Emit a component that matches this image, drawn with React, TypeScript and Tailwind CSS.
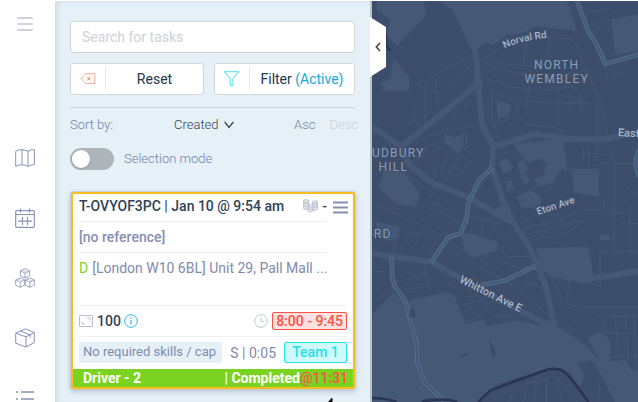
import { useState } from 'react';
import type { ReactNode } from 'react';

const areas = [
  'M205 0 H590 L620 92 L500 80 L455 100 L410 105 L372 135 L350 128 L318 152 L290 100 L262 40 Z',
  'M20 0 H160 L168 45 L80 138 L50 100 L62 60 L20 30 Z',
  'M72 175 L118 232 L118 272 H42 L32 250 L60 235 Z',
  'M724 58 L800 44 H830 V150 L735 165 Z',
  'M380 300 L424 315 L418 345 L384 355 Z',
  'M222 402 L252 412 L282 402 L280 440 L262 462 L245 440 L226 432 Z',
  'M432 432 L578 415 L592 508 L605 506 H686 V590 L612 578 L606 512 L575 508 L548 548 L500 560 L494 535 L520 528 L528 500 L505 478 L480 490 L455 470 Z',
  'M386 485 L410 475 L430 500 L420 515 L398 520 Z',
  'M440 490 L460 480 L474 510 L455 525 Z',
  'M406 545 L424 540 L432 568 L412 576 Z',
  'M450 528 L470 520 L480 545 L462 552 Z',
  'M440 590 L480 570 L515 590 L510 620 L455 625 Z',
  'M42 510 L100 515 L150 580 L140 620 L80 612 L25 560 Z',
  'M370 630 L408 608 L428 668 L368 646 Z',
  'M272 703 L300 700 L384 725 L382 752 L308 772 L285 755 Z',
  'M498 745 L655 740 L670 825 L628 836 L560 822 L515 790 Z',
  'M6 945 L70 880 L102 905 L222 876 L252 884 L285 972 L340 960 L350 978 L440 962 L540 980 L620 1030 L665 1080 L622 1090 L644 1125 L628 1165 L600 1120 L540 1105 L375 1155 L325 1206 H6 Z',
  'M655 1012 L690 995 L722 1022 L720 1085 L765 1080 L785 1110 L810 1110 V1206 H745 L705 1120 Z',
  'M690 705 H720 V720 H690 Z',
  'M15 662 L88 682 L85 710 L50 725 L25 700 Z',
];

const streets = [
  'M318 160 L240 200 L142 255 M142 258 L160 265 L208 280 L275 230 L310 180 M165 250 V380 M195 232 L202 310',
  'M330 180 L380 205 L450 222 L560 228 L645 212 M345 168 L400 190 L490 200 M330 185 L395 140 L500 108 L610 118',
  'M350 235 L420 260 L520 272 L600 262 L650 235 M362 245 L368 370 L392 420 M365 278 L440 300 L540 310 L640 305',
  'M480 230 L470 330 M565 228 V380 M598 280 V338 M632 275 V345 M580 310 H660 M440 300 L445 350 L475 375 L565 385',
  'M378 370 L440 350 M470 130 L460 190 M540 115 L535 160 L505 225 M330 330 H368 M610 118 L640 190 L690 300 L730 480',
  'M630 40 L724 25 M640 80 L720 60 M700 150 L712 240 M725 200 L735 250 M740 220 L765 215 M680 300 V480 M735 480 V750',
  'M290 290 V330 M205 310 L222 360 M235 330 L262 362 M130 325 L135 360 L150 378 M135 360 L112 368',
  'M155 415 L230 392 L305 378 L330 385 M125 485 L180 435 L220 425 M290 390 V440 L250 500 L210 560 M275 440 L310 465 M300 480 L260 530',
  'M205 480 L190 540 M230 465 L215 520 M165 445 L155 475 M250 500 L275 515 M380 470 L440 448 M350 505 L330 560',
  'M640 440 V480 M640 460 H680 M655 440 V500 M670 480 H710 M690 490 H790 M770 560 L805 590 M790 420 V480',
  'M160 615 L250 655 L290 690 M190 605 L240 640 M20 612 L120 660 L230 712 M110 695 L180 705 L215 740 M82 690 L70 760',
  'M125 690 L105 735 M150 700 L130 745 M175 705 L155 750 M200 715 L175 765 M215 740 L420 850 L540 950 M245 710 L430 800 L495 810',
  'M232 725 L400 812 M190 770 L212 820 L260 870 M160 785 L180 868 M70 850 L170 820 M6 815 L70 812 M105 868 L172 860 M75 850 L20 900',
  'M270 665 L300 650 L400 670 M380 650 L368 700 M345 660 L330 700 M400 735 L398 755 L412 770 L495 770 M380 710 L450 700 L470 680',
  'M450 670 L560 610 M460 690 L620 640 M470 705 L640 660 M490 720 L590 700 L640 660 M560 640 L590 695 M520 660 L535 700',
  'M700 600 L705 640 M730 600 V750 M680 755 H810 M640 630 H700 M780 610 V760 M690 640 H760 M755 670 H810',
  'M530 800 L560 860 L575 910 L640 920 H810 M505 855 L440 845 L420 862 M475 835 L455 870 M640 840 L690 860 V760 M600 830 L590 900',
  'M680 950 H805 M700 950 L710 1010 M735 945 L745 1070 M765 945 L775 1080 M790 945 L800 1115 M720 1070 H800 M710 1000 H800',
  'M250 885 L285 970 L350 935 L340 900 L275 915 M300 890 L325 885 L330 910 M285 970 L262 1000 M360 950 L460 945 M350 1120 L340 1200',
  'M375 1190 L470 1150 L560 1130 L620 1206 M430 1170 L418 1206 M470 1150 L460 1206 M500 1142 L492 1206 M530 1135 V1206 M560 1130 L575 1206',
  'M690 1140 L685 1206 M580 1010 L605 990 L595 975 M690 1140 L720 1130 M90 540 L60 590 M105 520 L160 560 M170 600 L205 570',
];

const mainRoads = [
  'M245 0 L318 160 L325 250 L335 370 L370 440 L365 505 L400 605 L430 668 L480 745 L505 800 L530 870 L555 985',
  'M325 250 L95 440 L6 380',
  'M95 440 L115 490 L180 545 L290 590 L430 668',
  'M370 440 L500 402 L600 418 L700 418 L810 395',
  'M6 760 L70 770 L182 785 L350 880 L555 985 L640 1040 L690 1100 L745 1206',
  'M505 795 L560 825 L640 840 L700 830 L810 812',
];

const highlights = [
  'M620 0 L655 95 L678 130 L706 192 L810 162',
  'M368 502 L328 540 L296 605 L290 655 L272 700 L235 712 L182 788',
  'M64 770 L68 840 L75 860 L105 900 L140 1030 L142 1090 L165 1150 L225 1204',
  'M335 855 L405 842 L495 798',
  'M806 450 L796 490 L806 530',
];

function MapView() {
  return (
    <svg
      role="img"
      aria-label="Map"
      viewBox="6 3 798 1203"
      preserveAspectRatio="xMinYMin slice"
      className="block h-full w-full"
      fill="none"
      strokeLinejoin="round"
    >
      <defs>
        <path id="norval" d="M404 145 Q462 117 560 112" />
        <path id="eton" d="M504 645 L640 600" />
        <path id="whitton" d="M266 846 L470 947" />
      </defs>
      <g fill="#455977">
        {areas.map((d) => (
          <path key={d} d={d} />
        ))}
      </g>
      <g stroke="#465875" strokeWidth="2.6">
        {streets.map((d) => (
          <path key={d} d={d} />
        ))}
      </g>
      <g stroke="#455876" strokeWidth="18">
        {mainRoads.map((d) => (
          <path key={d} d={d} />
        ))}
      </g>
      <circle cx="324" cy="248" r="15" fill="#455876" />
      <circle cx="508" cy="797" r="17" fill="#455876" />
      <g stroke="#5a7090" strokeWidth="13">
        {highlights.map((d) => (
          <path key={d} d={d} />
        ))}
      </g>
      <g stroke="#465b7a" strokeWidth="8">
        {highlights.map((d) => (
          <path key={d} d={d} />
        ))}
      </g>
      <g stroke="#2a3553" strokeWidth="8">
        <path d="M325 1206 L360 1172 L390 1160 L520 1113 Q545 1102 575 1110 Q595 1120 655 1206" />
        <path d="M0 1194 Q50 1194 80 1206 M155 1206 Q190 1196 240 1200 L262 1206" />
        <path d="M45 95 L50 140 L62 152" />
      </g>
      <path d="M120 930 L132 925 L138 950 L122 955 Z M262 1072 L298 1056 V1062 L264 1074 Z M358 1010 L378 1066 L366 1068 Z" fill="#3a4a68" />
      <path d="M484 490 L515 476 L526 495 L494 512 Z" stroke="#3e4e6c" strokeWidth="6" />
      <g
        fill="#8c9eb6"
        stroke="#3c4c69"
        strokeWidth="4"
        paintOrder="stroke"
        fontFamily="Roboto, sans-serif"
        fontSize="36"
        textAnchor="middle"
        className="tracking-widest"
      >
        <text x="560" y="207">NORTH</text>
        <text x="560" y="250">WEMBLEY</text>
        <text x="72" y="470">SUDBURY</text>
        <text x="70" y="514">HILL</text>
        <text x="12" y="713">FORD</text>
      </g>
      <g
        fill="#a9b7c8"
        stroke="#3c4c69"
        strokeWidth="4"
        paintOrder="stroke"
        fontFamily="Roboto, sans-serif"
        fontSize="30"
        fontWeight="500"
      >
        <text><textPath href="#norval">Norval Rd</textPath></text>
        <text><textPath href="#eton">Eton Ave</textPath></text>
        <text fontSize="33"><textPath href="#whitton">Whitton Ave E</textPath></text>
        <text x="743" y="408" fontSize="33" transform="rotate(4 743 408)">Eastcote</text>
      </g>
    </svg>
  );
}

function NavIcon({ label, children }: { label: string; children: ReactNode }) {
  return (
    <a href="#" aria-label={label} className="flex h-15 shrink-0 items-center justify-center">
      <svg width="20" height="20" viewBox="0 0 20 20" fill="none" stroke="#8794b8" strokeLinejoin="round">
        {children}
      </svg>
    </a>
  );
}

function Sidebar() {
  return (
    <nav className="flex w-[55px] shrink-0 flex-col overflow-hidden bg-white pr-[5px]">
      <button aria-label="Menu" className="mt-[15px] mb-24 flex h-4 shrink-0 items-center justify-center">
        <svg width="16" height="14" viewBox="0 0 16 14" stroke="#cfd4dc" strokeWidth="2" strokeLinecap="round">
          <path d="M1 1H15M1 7H15M1 13H15" />
        </svg>
      </button>
      <NavIcon label="Map">
        <path d="M.7 3.3Q4 1.2 7 1.7T13 3.3Q16 1 19.4 1.7V16.5Q16 16.5 13 18.3 10 16.8 7 16.8T.7 18.3ZM7 1.7V16.8M13 3.3V18.3" />
      </NavIcon>
      <NavIcon label="Calendar">
        <rect x=".7" y="2.7" width="18.6" height="16.6" rx="1" strokeWidth="1.2" />
        <path d="M.7 6.5H19.3M5.5.5V4.5M14.5.5V4.5M7.5 9V17M12.5 9V17M3 13.2H17" strokeWidth="1.2" />
      </NavIcon>
      <NavIcon label="Inventory">
        <g strokeWidth=".8">
          <path d="M10 .6 14.6 2.8V7.8L10 10 5.4 7.8V2.8ZM5.4 2.8 10 5.2 14.6 2.8M10 5.2V10" />
          <path d="M5.2 9.8 9.8 12V17L5.2 19.3.6 17V12ZM.6 12 5.2 14.3 9.8 12M5.2 14.3V19.3" />
          <path d="M14.8 9.8 19.4 12V17L14.8 19.3 10.2 17V12ZM10.2 12 14.8 14.3 19.4 12M14.8 14.3V19.3" />
          <path d="M7.5 2 12.2 4.2M3 11 7.5 13.2M12.5 11 17 13.2" strokeWidth=".5" />
        </g>
      </NavIcon>
      <NavIcon label="Packages">
        <path d="M10.5.9 19.3 4.5V14.5L11 19 .7 15.2V5.2ZM.7 5.2 11 8.8 19.3 4.5M11 8.8V19M5.5 3.2 15.2 6.7V9.5" />
      </NavIcon>
      <NavIcon label="List">
        <path d="M1 4H3M1 11H3M1 18H3M6 4H19M6 11H19M6 18H19" strokeWidth="1.6" />
      </NavIcon>
    </nav>
  );
}

function TaskCard() {
  return (
    <article className="mt-[22px] ml-px rounded-[3px] border-2 border-[#fcbc1c] bg-white text-sm shadow-[0_0_0_1px_#c5ced6,0_2px_5px_1px_#b9c8d2]">
      <div className="flex pr-[5px] pl-1.5">
        <div className="min-w-0 flex-1">
          <header className="flex h-7 items-center border-b border-[#edf1f4] pb-1 font-medium text-[#2f4256]">
            <h2 className="flex-1 whitespace-nowrap">T-OVYOF3PC | Jan 10 @ 9:54 am</h2>
            <svg width="15" height="14" viewBox="0 0 15 14" fill="#e8ebf1" stroke="#b4bccd" strokeWidth=".9" className="mr-1 shrink-0">
              <path d="M.6 2V9.5Q3 11.5 5.5 9.5V2Z" />
              <ellipse cx="3.2" cy="2" rx="2.6" ry="1.4" />
              <path d="M9.5 3.5V10.5Q12 12.3 14.4 10.5V3.5Z" />
              <ellipse cx="12" cy="3.2" rx="2.5" ry="1.4" />
              <path d="M5 7V12Q7.5 14.2 10 12V7Z" />
              <ellipse cx="7.5" cy="6.8" rx="2.5" ry="1.4" />
              <path d="M.6 4.5Q3 6 5.5 4.5M.6 7Q3 8.5 5 7M10 8Q12 9 14.4 8M10 5.8Q12 7 14.4 5.8M5 9.5Q7.5 11.2 10 9.5" fill="none" />
            </svg>
            <span>-</span>
          </header>
          <p className="flex h-[31px] items-center border-b border-[#edf1f4] font-medium text-[#8490b3]">[no reference]</p>
          <p className="flex h-[30px] items-center gap-1 whitespace-nowrap text-[#7f8bad]">
            <span className="text-[#7bd321]">D</span>
            <span>[London W10 6BL] Unit 29, Pall Mall ...</span>
          </p>
        </div>
        <button aria-label="Task menu" className="ml-1.5 flex h-[26px] items-center">
          <svg width="15" height="13" viewBox="0 0 15 13" stroke="#8490b3" strokeWidth="1.8">
            <path d="M0 1.5H15M0 6.5H15M0 11.5H15" />
          </svg>
        </button>
      </div>

      <div className="mx-1.5 mt-[22px] flex h-8 items-center border-y border-[#edf1f4]">
        <svg width="14" height="12" viewBox="0 0 14 12" fill="none" stroke="#b9bfd3">
          <path d="M.5.5H13.5V11.5H.5ZM8 3H11V5.5M3 6.5V9H6" />
        </svg>
        <span className="ml-1 font-medium text-[#2f4256]">100</span>
        <svg width="14" height="14" viewBox="0 0 14 14" fill="none" stroke="#2ab5e0" className="ml-[3px]">
          <circle cx="7" cy="7" r="6.3" />
          <path d="M7 6V10.5M7 3.3V4.7" strokeWidth="1.2" />
        </svg>
        <svg width="14" height="14" viewBox="0 0 14 14" fill="none" stroke="#c0c5d2" className="mr-1 ml-auto">
          <circle cx="7" cy="7" r="6.3" />
          <path d="M7 3V7.5H10.5" />
        </svg>
        <span className="flex h-[18px] items-center rounded-[2px] border border-[#fc5147] bg-[#fee2e1] px-[3px] font-medium text-[#fc5147]">
          8:00 - 9:45
        </span>
      </div>

      <div className="mx-1.5 flex h-8 items-center pb-px whitespace-nowrap text-[#7f8bad]">
        <span className="h-[21px] min-w-0 flex-1 overflow-hidden rounded-[2px] bg-[#e5f0f7] pl-1 text-[13px] leading-[19px]">
          No required skills / cap
        </span>
        <span className="mx-2">S | 0:05</span>
        <button className="h-[21px] w-[63px] rounded-[2px] border border-[#1fe3ea] bg-[#d0f9fb] leading-[19px] font-medium text-[#1fe3ea]">
          Team 1
        </button>
      </div>

      <footer className="flex h-[18px] items-center justify-between bg-[#7bd321] pr-[5px] pl-2.5 font-bold text-white">
        <span>Driver - 2</span>
        <span>
          | Completed<span className="font-medium text-[#fc5147]">@11:31</span>
        </span>
      </footer>
    </article>
  );
}

function TaskPanel() {
  const [selection, setSelection] = useState(false);
  return (
    <section className="relative w-[317px] shrink-0 border-r-2 border-[#b7c4c8] bg-[#e5f0f7] px-[15px] pt-5 shadow-[inset_5px_2px_6px_-3px_#c9d8e0]">
      <input
        type="search"
        aria-label="Search for tasks"
        placeholder="Search for tasks"
        className="block h-8 w-full rounded-[3px] border border-[#d0d5da] bg-white px-[11px] text-sm outline-none placeholder:text-[#cbd2d9]"
      />
      <div className="mt-2.5 flex gap-2.5">
        <button className="flex h-8 w-[134px] items-center rounded-[3px] border border-[#d0d5da] bg-white text-sm text-[#22364a]">
          <svg width="35" height="22" viewBox="0 0 35 22" fill="none" stroke="#f5a98c" className="border-r border-[#e3e6ea]">
            <path d="M10.5 10.7 15 5.5H24.5V15.5H15Z" />
            <path d="M16.8 8.8 20 12.4M20 8.8 16.8 12.4" stroke="#ee7f55" />
          </svg>
          <span className="flex-1">Reset</span>
        </button>
        <button className="flex h-8 flex-1 items-center rounded-[3px] border border-[#d0d5da] bg-white text-sm text-[#22364a]">
          <svg width="35" height="22" viewBox="0 0 35 22" fill="none" stroke="#3fe3ea" className="border-r border-[#e3e6ea]">
            <path d="M9.5 3.5H24.5L18.5 10.5V17.5H15.5V10.5Z" />
          </svg>
          <span className="flex-1">
            Filter <span className="text-[#18a8e0]">(Active)</span>
          </span>
        </button>
      </div>

      <div className="mt-3 flex h-[35px] items-center border-t border-[#c9d3da] text-[13px] font-light text-[#7480ab]">
        <span className="w-26">Sort by:</span>
        <button className="flex items-center gap-[5px] text-[#33475a]">
          Created
          <svg width="10" height="8" viewBox="0 0 10 8" fill="none" stroke="#33475a" strokeWidth="1.3">
            <path d="M.7 1 5 6.5 9.3 1" />
          </svg>
        </button>
        <button className="ml-auto">Asc</button>
        <button className="-mr-[3px] ml-3.5 text-[#c8d0d8]">Desc</button>
      </div>

      <label className="mt-1.5 flex h-[22px] items-center text-[13px] font-light text-[#7480ab]">
        <input
          type="checkbox"
          checked={selection}
          onChange={(e) => setSelection(e.target.checked)}
          className="peer sr-only"
        />
        <span className="mr-2.5 flex h-[22px] w-11 items-center rounded-full bg-[#adb4ba] px-0.5 peer-checked:justify-end">
          <span className="size-[18px] rounded-full bg-white shadow-sm" />
        </span>
        Selection mode
      </label>

      <TaskCard />

      <svg width="5" height="4" viewBox="0 0 5 4" className="absolute right-[37px] bottom-0">
        <path d="M0 4 3.5 0H4.5V4Z" fill="#111" />
      </svg>

      <button
        aria-label="Collapse panel"
        className="absolute top-4 -right-4 flex h-15 w-4 items-center justify-center bg-white [clip-path:polygon(0_0,100%_10px,100%_50px,0_100%)]"
      >
        <svg width="6" height="10" viewBox="0 0 6 10" fill="none" stroke="#444" strokeWidth="1.5">
          <path d="M5 1 1.3 5 5 9" />
        </svg>
      </button>
    </section>
  );
}

export default function App() {
  return (
    <div className="flex h-screen overflow-hidden bg-white pt-px font-[Roboto,sans-serif]">
      <Sidebar />
      <TaskPanel />
      <main className="min-w-0 flex-1 bg-[#3d4e6c]">
        <MapView />
      </main>
    </div>
  );
}
